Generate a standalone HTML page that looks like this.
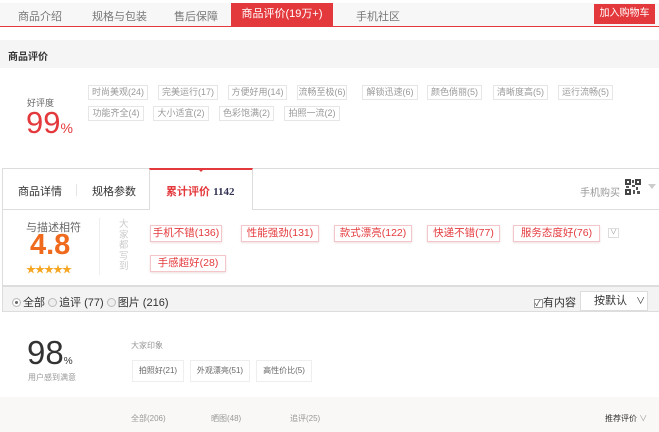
<!DOCTYPE html>
<html><head><meta charset="utf-8">
<style>
*{margin:0;padding:0;box-sizing:border-box}
body{width:659px;height:432px;overflow:hidden;background:#fff;font-family:"Liberation Sans","Noto Sans CJK SC",sans-serif;color:#666;position:relative;font-size:12px}
.a{position:absolute;white-space:nowrap}
.nav{left:0;top:3px;width:659px;height:24px;background:#f7f7f7;border-bottom:1px solid #e4393c}
.nav span{position:absolute;top:5px;font-size:11px;color:#777}
.tag{position:absolute;height:15px;border:1px solid #e6e6e6;font-size:9px;line-height:13px;color:#999;text-align:center}
.rt{position:absolute;height:17px;border:1px solid #f5c6c9;font-size:10.5px;line-height:15px;color:#e4393c;text-align:center;box-shadow:0 1px 2px #f0e0e0}
.bt{position:absolute;top:360px;height:22px;border:1px solid #eee;font-size:8px;line-height:20px;color:#666;text-align:center}
.radio{display:inline-block;width:9px;height:9px;border-radius:50%;border:1px solid #bbb;background:#eee;vertical-align:-1px;margin-right:2px}
</style></head><body>
<div class="a nav">
<span style="left:18px">商品介绍</span>
<span style="left:92px">规格与包装</span>
<span style="left:174px">售后保障</span>
<span style="left:356px">手机社区</span>
</div>
<div class="a" style="left:231px;top:3px;width:102px;height:24px;background:#e4393c;color:#fff;font-size:11px;text-align:center;line-height:22px">商品评价(19万+)</div>
<div class="a" style="left:594px;top:4px;width:61px;height:20px;background:#e4393c;color:#fff;font-size:10px;text-align:center;line-height:20px">加入购物车</div>

<div class="a" style="left:0;top:40px;width:659px;height:28px;background:#f5f5f5"></div>
<div class="a" style="left:8px;top:48px;font-size:10px;color:#333;font-weight:bold">商品评价</div>

<div class="a" style="left:27px;top:96px;font-size:9px;color:#666">好评度</div>
<div class="a" style="left:26px;top:105px;font-size:31px;color:#e4393c;font-family:'Liberation Sans',sans-serif">99<span style="font-size:14px">%</span></div>
<div class="tag" style="left:88px;top:85px;width:60px">时尚美观(24)</div>
<div class="tag" style="left:158px;top:85px;width:60px">完美运行(17)</div>
<div class="tag" style="left:228px;top:85px;width:59px">方便好用(14)</div>
<div class="tag" style="left:297px;top:85px;width:50px">流畅至极(6)</div>
<div class="tag" style="left:362px;top:85px;width:56px">解锁迅速(6)</div>
<div class="tag" style="left:427px;top:85px;width:55px">颜色倘丽(5)</div>
<div class="tag" style="left:493px;top:85px;width:55px">清晰度高(5)</div>
<div class="tag" style="left:558px;top:85px;width:55px">运行流畅(5)</div>
<div class="tag" style="left:88px;top:106px;width:56px">功能齐全(4)</div>
<div class="tag" style="left:153px;top:106px;width:56px">大小适宜(2)</div>
<div class="tag" style="left:219px;top:106px;width:55px">色彩饱满(2)</div>
<div class="tag" style="left:284px;top:106px;width:56px">拍照一流(2)</div>

<div class="a" style="left:2px;top:168px;width:657px;height:118px;border:1px solid #ddd;border-right:none"></div>
<div class="a" style="left:2px;top:209px;width:657px;height:1px;background:#ddd"></div>
<div class="a" style="left:18px;top:183px;font-size:11px;color:#333">商品详情</div>
<div class="a" style="left:76px;top:184px;width:1px;height:12px;background:#e5e5e5"></div>
<div class="a" style="left:92px;top:183px;font-size:11px;color:#333">规格参数</div>
<div class="a" style="left:149px;top:168px;width:104px;height:42px;background:#fff;border:1px solid #ddd;border-top:2px solid #e4393c;border-bottom:none"></div>
<div class="a" style="left:197px;top:168px;width:0;height:0;border-left:4px solid transparent;border-right:4px solid transparent;border-top:4px solid #e4393c"></div>
<div class="a" style="left:166px;top:183px;font-size:11px;color:#e4393c;font-weight:bold">累计评价 <span style="color:#335;font-family:'Liberation Serif',serif">1142</span></div>
<div class="a" style="left:580px;top:184px;font-size:10px;color:#999">手机购买</div>
<svg class="a" style="left:625px;top:179px" width="16" height="16" viewBox="0 0 16 16"><rect width="16" height="16" fill="#fff"/><rect x="0" y="0" width="6" height="6" fill="#444"/><rect x="10" y="0" width="6" height="6" fill="#444"/><rect x="0" y="10" width="6" height="6" fill="#444"/><rect x="2" y="2" width="2" height="2" fill="#fff"/><rect x="12" y="2" width="2" height="2" fill="#fff"/><rect x="2" y="12" width="2" height="2" fill="#fff"/><rect x="7" y="1" width="2" height="3" fill="#555"/><rect x="7" y="6" width="3" height="2" fill="#555"/><rect x="11" y="8" width="2" height="3" fill="#555"/><rect x="8" y="11" width="2" height="4" fill="#555"/><rect x="12" y="12" width="3" height="3" fill="#555"/><rect x="1" y="7" width="3" height="2" fill="#555"/></svg>
<div class="a" style="left:648px;top:184px;width:0;height:0;border-left:4px solid transparent;border-right:4px solid transparent;border-top:5px solid #ccc"></div>

<div class="a" style="left:26px;top:219px;font-size:11px;color:#666">与描述相符</div>
<div class="a" style="left:30px;top:229px;font-size:29px;font-weight:bold;color:#f06a1e">4.8</div>
<div class="a" style="left:26px;top:261px;font-size:10px;color:#f5a623;letter-spacing:-1px">★★★★★</div>
<div class="a" style="left:99px;top:218px;width:1px;height:57px;background:#eee"></div>
<div class="a" style="left:119px;top:220px;width:10px;font-size:9.5px;line-height:10.5px;color:#ccc;white-space:normal">大家都写到</div>
<div class="rt" style="left:150px;top:225px;width:72px">手机不错(136)</div>
<div class="rt" style="left:241px;top:225px;width:78px">性能强劲(131)</div>
<div class="rt" style="left:334px;top:225px;width:78px">款式漂亮(122)</div>
<div class="rt" style="left:427px;top:225px;width:73px">快递不错(77)</div>
<div class="rt" style="left:513px;top:225px;width:87px">服务态度好(76)</div>
<div class="a" style="left:608px;top:228px;width:11px;height:10px;border:1px solid #ddd;font-size:7px;line-height:8px;text-align:center;color:#999">∨</div>
<div class="rt" style="left:150px;top:255px;width:76px">手感超好(28)</div>

<div class="a" style="left:2px;top:286px;width:657px;height:26px;background:#f3f3f3;border:1px solid #ddd;border-right:none"></div>
<div class="a" style="left:12px;top:294px;font-size:11px;color:#333"><span class="radio" style="background:#fff;box-shadow:inset 0 0 0 2px #fff,inset 0 0 0 4px #666"></span>全部 <span class="radio"></span>追评 (77) <span class="radio"></span>图片 (216)</div>
<div class="a" style="left:534px;top:294px;font-size:11px;color:#333"><span style="display:inline-block;width:9px;height:9px;border:1px solid #999;background:#fff;font-size:8px;line-height:7px;vertical-align:0">✓</span>有内容</div>
<div class="a" style="left:580px;top:291px;width:68px;height:20px;background:#fff;border:1px solid #ddd;font-size:11px;color:#333;line-height:18px;padding-left:13px">按默认 <span style="margin-left:6px;font-size:9px">∨</span></div>

<div class="a" style="left:27px;top:334px;font-size:33px;color:#333;font-family:'Liberation Sans',sans-serif">98<span style="font-size:10px">%</span></div>
<div class="a" style="left:28px;top:372px;font-size:8px;color:#999">用户感到满意</div>
<div class="a" style="left:131px;top:340px;font-size:8px;color:#999">大家印象</div>
<div class="bt" style="left:132px;width:52px">拍照好(21)</div>
<div class="bt" style="left:190px;width:60px">外观漂亮(51)</div>
<div class="bt" style="left:256px;width:56px">高性价比(5)</div>

<div class="a" style="left:0;top:397px;width:659px;height:35px;background:#f9f8f6"></div>
<div class="a" style="left:131px;top:413px;font-size:8px;color:#999">全部(206)</div>
<div class="a" style="left:211px;top:413px;font-size:8px;color:#999">晒图(48)</div>
<div class="a" style="left:290px;top:413px;font-size:8px;color:#999">追评(25)</div>
<div class="a" style="left:605px;top:413px;font-size:8px;color:#333">推荐评价 <span style="color:#999">∨</span></div>
</body></html>
